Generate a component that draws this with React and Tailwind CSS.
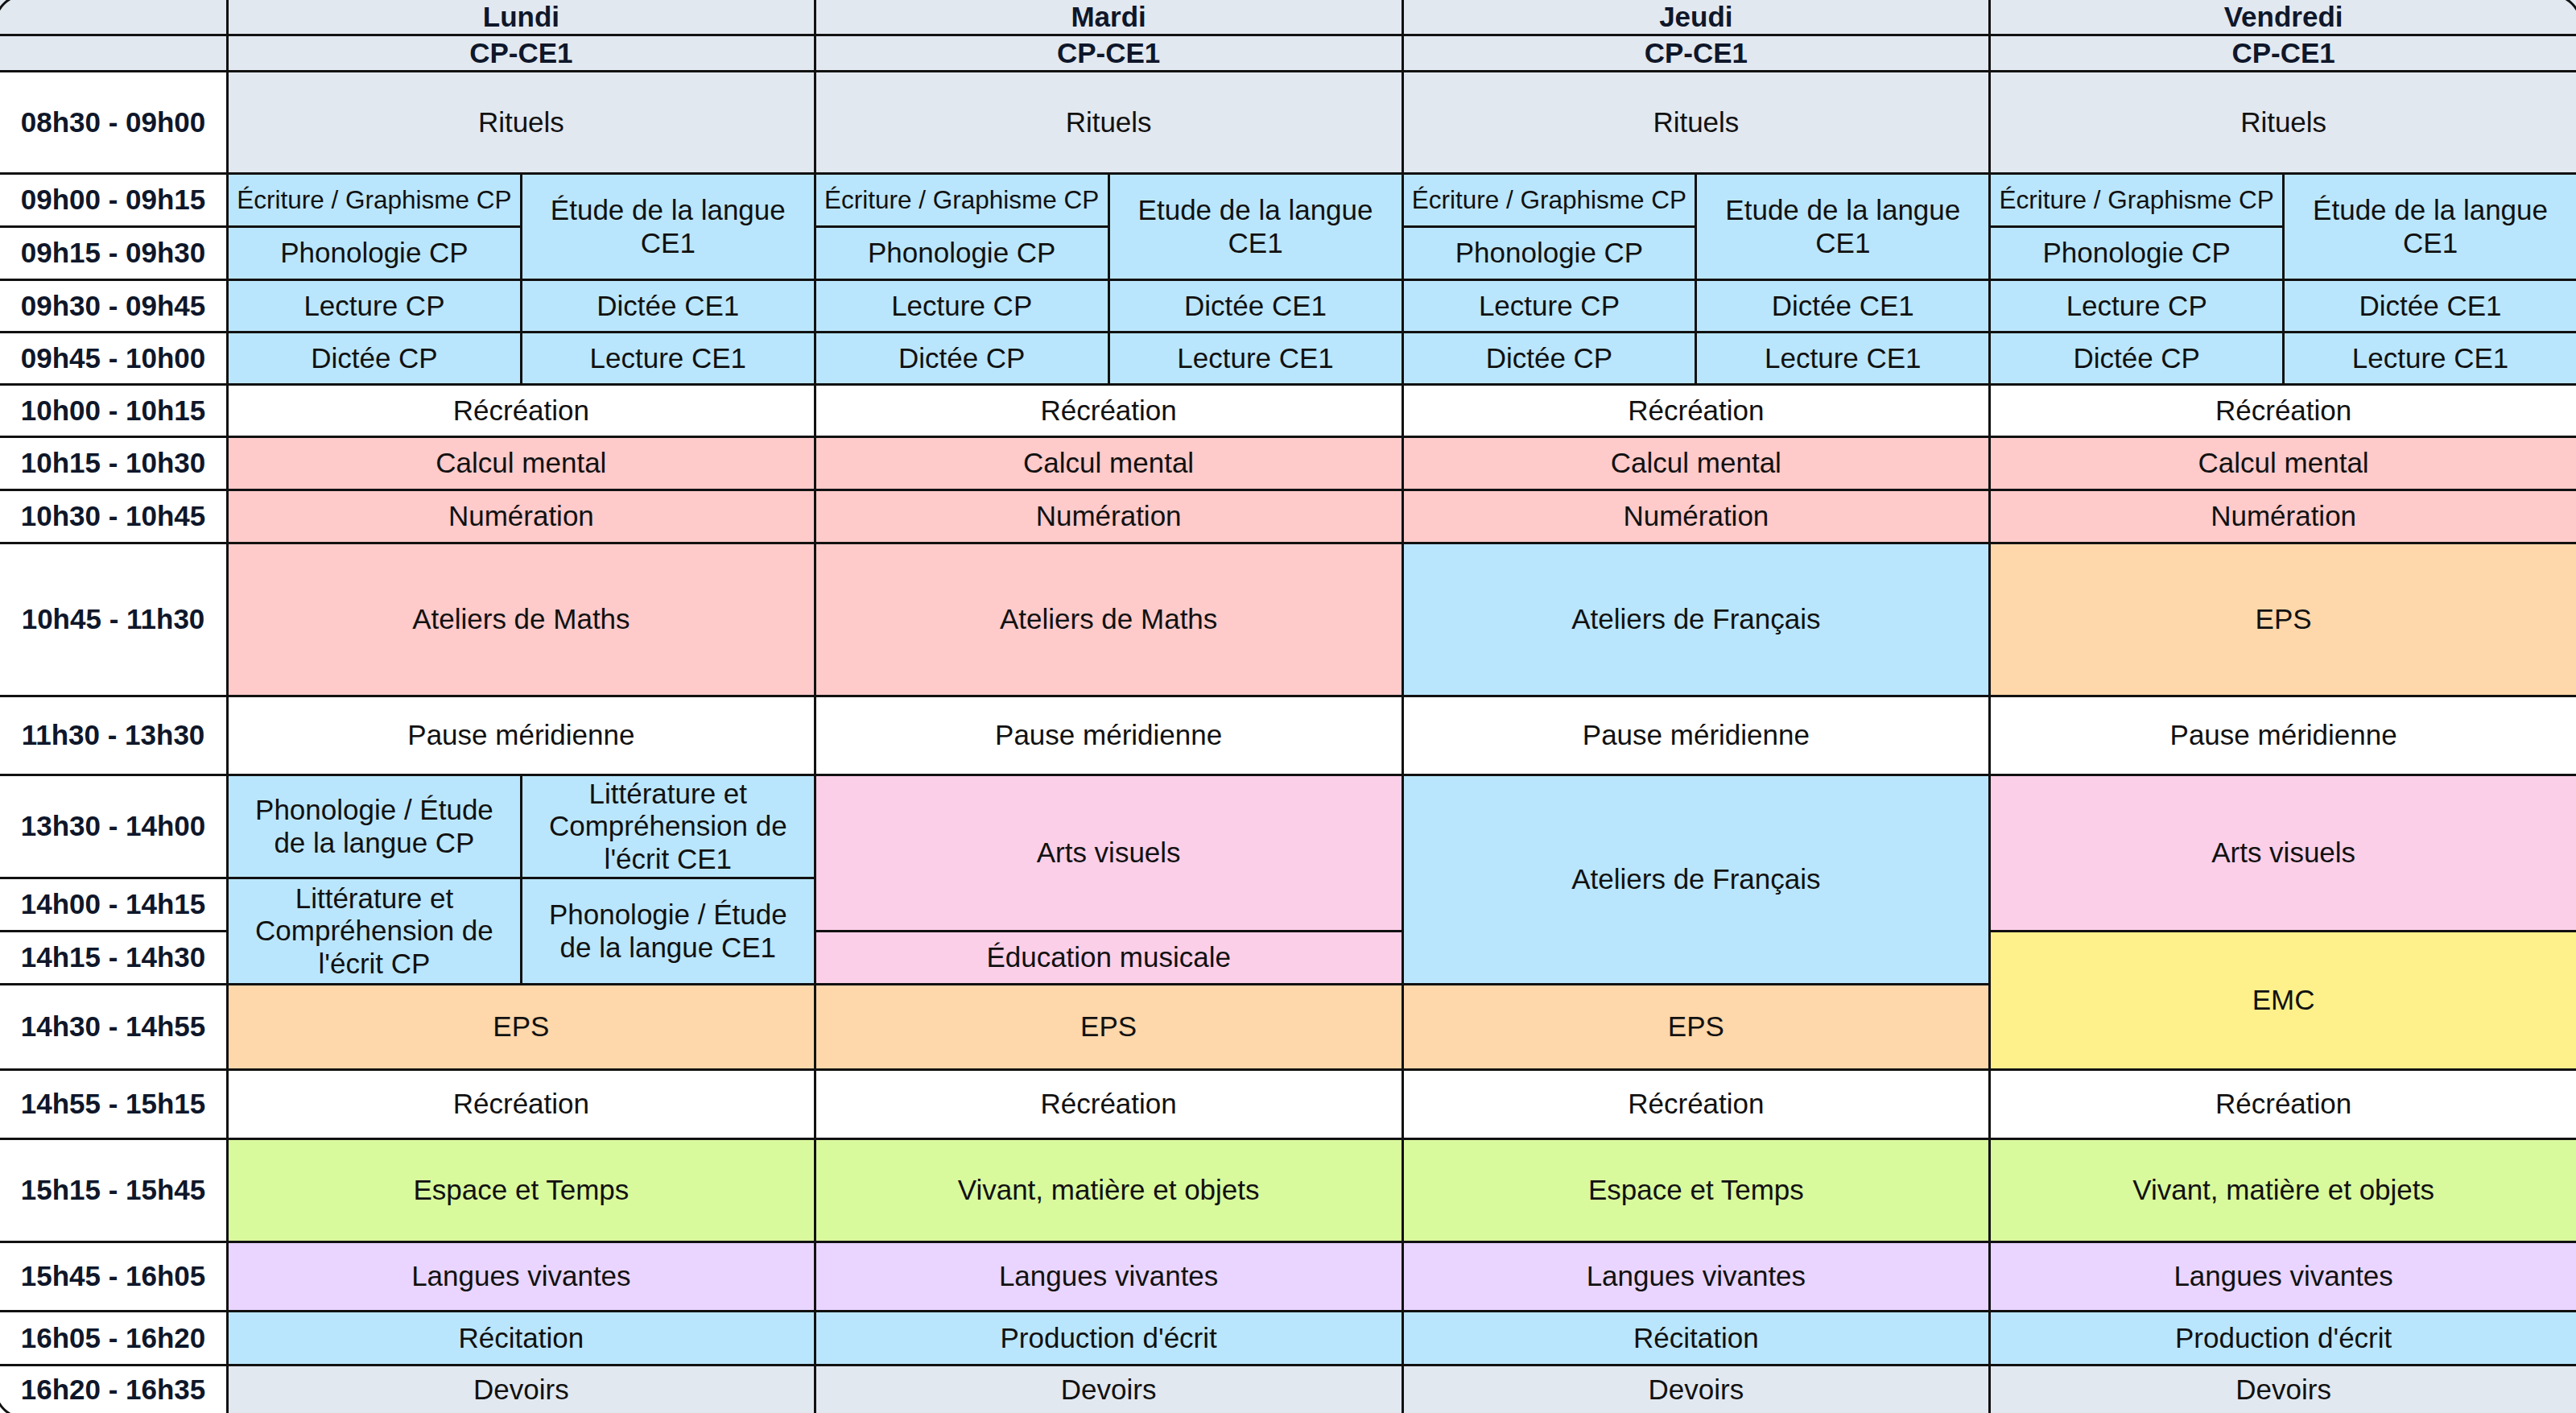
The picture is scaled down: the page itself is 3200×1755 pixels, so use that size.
const DAYS = ["Lundi", "Mardi", "Jeudi", "Vendredi"];

const SLATE = "bg-[#e2e8f0]";
const BLUE = "bg-[#bae6fd]";
const RED = "bg-[#fecaca]";
const ORANGE = "bg-[#fed7aa]";
const PINK = "bg-[#fbcfe8]";
const YELLOW = "bg-[#fef08a]";
const GREEN = "bg-[#d9f99d]";
const PURPLE = "bg-[#e9d5ff]";
const WHITE = "bg-white";

const time = (t) => ({ t, k: "bg-white font-bold text-[#0f172a]" });
const day = (t, bg) => ({ t, k: `col-span-2 ${bg}` });
const all = (t, bg) => DAYS.map(() => day(t, bg));

const rows = [
  [{ t: "", k: SLATE }, ...DAYS.map((d) => ({ t: d, k: "col-span-2 bg-[#e2e8f0] font-bold text-[#0f172a]" }))],
  [{ t: "", k: SLATE }, ...DAYS.map(() => ({ t: "CP-CE1", k: "col-span-2 bg-[#e2e8f0] font-bold text-[#0f172a]" }))],
  [time("08h30 - 09h00"), ...all("Rituels", SLATE)],
  [
    time("09h00 - 09h15"),
    ...DAYS.flatMap((d, i) => [
      { t: "Écriture / Graphisme CP", k: BLUE + " whitespace-nowrap", small: true },
      { t: i === 1 || i === 2 ? "Etude de la langue CE1" : "Étude de la langue CE1", k: "row-span-2 " + BLUE },
    ]),
  ],
  [time("09h15 - 09h30"), ...DAYS.map(() => ({ t: "Phonologie CP", k: BLUE }))],
  [time("09h30 - 09h45"), ...DAYS.flatMap(() => [{ t: "Lecture CP", k: BLUE }, { t: "Dictée CE1", k: BLUE }])],
  [time("09h45 - 10h00"), ...DAYS.flatMap(() => [{ t: "Dictée CP", k: BLUE }, { t: "Lecture CE1", k: BLUE }])],
  [time("10h00 - 10h15"), ...all("Récréation", WHITE)],
  [time("10h15 - 10h30"), ...all("Calcul mental", RED)],
  [time("10h30 - 10h45"), ...all("Numération", RED)],
  [
    time("10h45 - 11h30"),
    day("Ateliers de Maths", RED),
    day("Ateliers de Maths", RED),
    day("Ateliers de Français", BLUE),
    day("EPS", ORANGE),
  ],
  [time("11h30 - 13h30"), ...all("Pause méridienne", WHITE)],
  [
    time("13h30 - 14h00"),
    { t: "Phonologie / Étude de la langue CP", k: BLUE },
    { t: "Littérature et Compréhension de l'écrit CE1", k: BLUE },
    { t: "Arts visuels", k: "col-span-2 row-span-2 " + PINK },
    { t: "Ateliers de Français", k: "col-span-2 row-span-3 " + BLUE },
    { t: "Arts visuels", k: "col-span-2 row-span-2 " + PINK },
  ],
  [
    time("14h00 - 14h15"),
    { t: "Littérature et Compréhension de l'écrit CP", k: "row-span-2 " + BLUE },
    { t: "Phonologie / Étude de la langue CE1", k: "row-span-2 " + BLUE },
  ],
  [
    time("14h15 - 14h30"),
    day("Éducation musicale", PINK),
    { t: "EMC", k: "col-span-2 row-span-2 " + YELLOW },
  ],
  [time("14h30 - 14h55"), day("EPS", ORANGE), day("EPS", ORANGE), day("EPS", ORANGE)],
  [time("14h55 - 15h15"), ...all("Récréation", WHITE)],
  [
    time("15h15 - 15h45"),
    day("Espace et Temps", GREEN),
    day("Vivant, matière et objets", GREEN),
    day("Espace et Temps", GREEN),
    day("Vivant, matière et objets", GREEN),
  ],
  [time("15h45 - 16h05"), ...all("Langues vivantes", PURPLE)],
  [
    time("16h05 - 16h20"),
    day("Récitation", BLUE),
    day("Production d'écrit", BLUE),
    day("Récitation", BLUE),
    day("Production d'écrit", BLUE),
  ],
  [time("16h20 - 16h35"), ...all("Devoirs", SLATE)],
];

export default function App() {
  return (
    <div className="relative h-[1755px] overflow-hidden bg-white font-['Liberation_Sans',Arial,sans-serif] text-[#111]">
      <div className="grid grid-cols-[281px_repeat(8,minmax(0,1fr))] grid-rows-[42px_42px_124px_63px_63px_62px_62px_62px_63px_63px_187px_95px_125px_63px_63px_103px_83px_125px_83px_64px_58px] gap-[3px] bg-[#111]">
        {rows.flat().map((c, i) => (
          <div
            key={i}
            className={`flex items-center justify-center text-center leading-[1.15] ${
              c.small ? "px-[6px] text-[31.5px]" : "px-[12px] text-[35px]"
            } ${c.k}`}
          >
            {c.t}
          </div>
        ))}
      </div>
      {/* outer rounded frame, only its corners show */}
      <div className="pointer-events-none absolute -inset-[8px] rounded-tl-[40px] rounded-tr-[40px] rounded-bl-[40px] border-[3px] border-[#111]" />
    </div>
  );
}
